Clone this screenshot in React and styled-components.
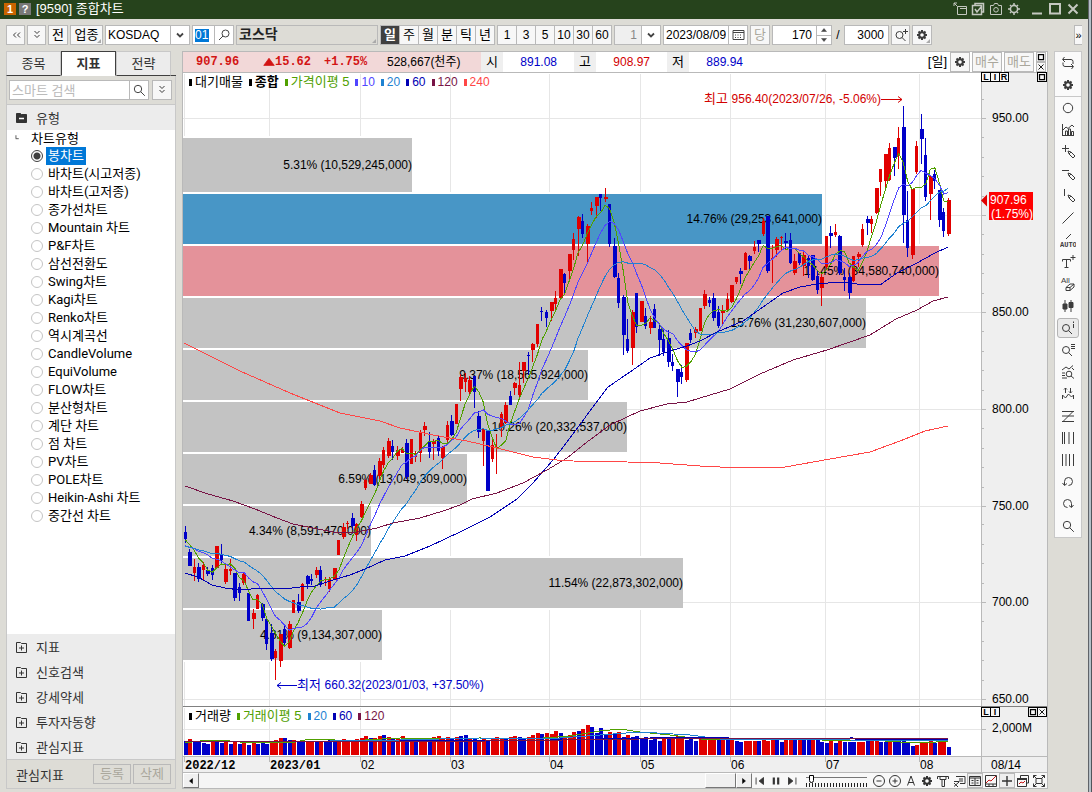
import React from 'react';
import styled, { createGlobalStyle } from 'styled-components';

const GlobalStyle = createGlobalStyle`
    * { box-sizing: border-box; }
    body {
        margin: 0;
        background: #dddcd6;
        font-family: "Liberation Sans", "Noto Sans CJK KR", sans-serif;
        font-size: 12px;
        color: #000;
    }
    button, input, select {
        font: inherit;
        color: inherit;
        margin: 0;
        padding: 0;
        border-radius: 0;
    }
`;

const RED = '#e10000';
const BLUE = '#0000c8';
const GREEN = '#50a000';
const VIOLET = '#5046ff';
const SKY = '#1e82d2';
const NAVY = '#0000b4';
const MAROON = '#781446';
const CORAL = '#ff4646';

/* ---------- window ---------- */

const Window = styled.div`
    display: flex;
    flex-direction: column;
    min-height: 100vh;
    padding-right: 4px;
    background: #dddcd6;
    box-shadow: inset -1px 0 #50545a, inset -3px 0 #b4bfc7, inset -4px 0 #60646a;
`;

const TitleBar = styled.header`
    display: flex;
    align-items: center;
    height: 19px;
    padding: 0 6px 2px 4px;
    background: #26431c;
    color: #fff;
`;

const Badge = styled.span`
    width: 12px;
    height: 12px;
    margin-right: 3px;
    background: ${(p) => p.$bg};
    font-size: 11px;
    font-weight: bold;
    line-height: 13px;
    text-align: center;
`;

const Title = styled.h1`
    margin: 0 auto 0 2px;
    font-size: 13px;
    line-height: 16px;
    font-weight: normal;
`;

const TitleButton = styled.button`
    display: flex;
    justify-content: center;
    width: 18px;
    border: 0;
    background: none;
    color: #c4c8c0;
`;

const TitleGap = styled.span`
    width: 5px;
`;

/* ---------- toolbar ---------- */

const Toolbar = styled.div`
    display: flex;
    height: 32px;
    padding: 6px;
    gap: 2px;
`;

const ToolButton = styled.button`
    position: relative;
    display: flex;
    align-items: center;
    justify-content: center;
    flex: none;
    width: ${(p) => p.$w || 20}px;
    height: 20px;
    border: 1px solid #b9b9b9;
    background: #f7f7f7;
    color: ${(p) => (p.disabled ? '#aaa79c' : '#000')};
    font-size: 13px;
    line-height: 18px;
    svg { flex: none; color: #3c3c3c; }
`;

const Corner = styled.i`
    position: absolute;
    right: 1px;
    bottom: 1px;
    border: 2px solid transparent;
    border-right-color: #aaa;
    border-bottom-color: #aaa;
`;

const Field = styled.div`
    display: flex;
    flex: none;
    width: ${(p) => p.$w}px;
    height: 20px;
    border: 1px solid #b9b9b9;
    background: #fff;
`;

const FieldInput = styled.input`
    flex: 1;
    min-width: 0;
    border: 0;
    padding: 0 ${(p) => (p.$right ? 4 : 2)}px;
    background: ${(p) => (p.disabled ? '#efefef' : '#fff')};
    color: ${(p) => (p.disabled ? '#888' : '#000')};
    text-align: ${(p) => (p.$right ? 'right' : 'left')};
    outline: 0;
    &::placeholder { color: #bbb; opacity: 1; }
`;

const Select = styled.select`
    flex: 1;
    min-width: 0;
    border: 0;
    padding: 0 2px;
    appearance: none;
    background: #fff;
`;

const FieldButton = styled.button`
    display: flex;
    flex: none;
    align-items: center;
    justify-content: center;
    width: 19px;
    border: 0;
    border-left: 1px solid #b9b9b9;
    background: #fff;
    color: #444;
`;

const CodeBox = styled.div`
    flex: 1;
    display: flex;
    align-items: center;
`;

const CodeInput = styled.input`
    width: 14px;
    height: 13px;
    margin-left: 2px;
    border: 0;
    background: #0078d7;
    color: #fff;
`;

const NameBox = styled.output`
    position: relative;
    flex: 0 1 142px;
    border: 1px solid #b9b9b9;
    padding-left: 2px;
    font-size: 14px;
    line-height: 17px;
    font-weight: bold;
    color: #222;
`;

const Segment = styled.div`
    display: flex;
    flex: none;
    border: 1px solid #b9b9b9;
    border-width: 1px 1px 1px 0;
`;

const SegmentButton = styled.button`
    width: 19px;
    border: 0;
    border-left: 1px solid #b9b9b9;
    background: ${(p) => (p.$active ? '#404040' : '#f7f7f7')};
    color: ${(p) => (p.$active ? '#fff' : '#000')};
    font-weight: ${(p) => (p.$active ? 'bold' : 'normal')};
    font-size: ${(p) => (p.$latin ? 12 : 13)}px;
    line-height: 18px;
`;

const Spin = styled.div`
    display: flex;
    flex-direction: column;
    width: 15px;
    border-left: 1px solid #b9b9b9;
`;

const SpinButton = styled.button`
    flex: 1;
    display: flex;
    align-items: center;
    justify-content: center;
    border: 0;
    border-bottom: ${(p) => (p.$up ? '1px solid #b9b9b9' : '0')};
    background: #fff;
    color: #444;
`;

const Slash = styled.span`
    width: 8px;
    text-align: center;
    line-height: 20px;
`;

const MoreButton = styled.button`
    width: 8px;
    height: 20px;
    margin-left: auto;
    border: 1px solid #b9b9b9;
    border-right: 0;
    background: #f7f7f7;
    font-size: 11px;
    line-height: 16px;
`;

/* ---------- side panel ---------- */

const Body = styled.main`
    flex: 1;
    display: grid;
    grid-template-columns: 170px minmax(0, 1fr) 28px;
    gap: 6px;
    padding: 0 6px 3px;
`;

const Side = styled.aside`
    display: flex;
    flex-direction: column;
`;

const Tabs = styled.div`
    display: flex;
    height: 25px;
    border-bottom: 1px solid #404040;
`;

const Tab = styled.button`
    width: 55px;
    height: 25px;
    border: 1px solid ${(p) => (p.$active ? '#404040' : '#c8c8c8')};
    border-bottom-color: ${(p) => (p.$active ? '#fff' : '#404040')};
    background: ${(p) => (p.$active ? '#fff' : '#ececec')};
    font-size: 13px;
    line-height: 22px;
    font-weight: ${(p) => (p.$active ? 'bold' : 'normal')};
    color: #333;
`;

const SideBox = styled.div`
    flex: 1;
    display: flex;
    flex-direction: column;
    border: 1px solid #c8c8c8;
    border-top: 0;
`;

const SearchRow = styled.div`
    display: flex;
    gap: 3px;
    padding: 4px 3px 4px 2px;
`;

const SearchField = styled(Field)`
    flex: 1;
    min-width: 0;
    font-size: 13px;
`;

const SectionHead = styled.button`
    display: flex;
    align-items: center;
    gap: 6px;
    height: 26px;
    padding: 0 7px;
    border: 0;
    border-top: ${(p) => (p.$line ? '1px solid #c8c8c8' : '0')};
    background: #ececec;
    font-size: 13px;
    color: #333;
`;

const Tree = styled.div`
    flex: 1;
    background: #fff;
    font-family: Roboto, "Noto Sans CJK KR", sans-serif;
    font-size: 13px;
    line-height: 18px;
`;

const TreeTitle = styled.div`
    display: flex;
    align-items: center;
    gap: 6px;
    height: 17px;
    padding-left: 8px;
`;

const RadioRow = styled.label`
    display: flex;
    align-items: center;
    height: 18px;
    padding-left: 24px;
    gap: 3px;
    span {
        padding: 0 2px;
        background: ${(p) => (p.$on ? '#0078d7' : 'none')};
        color: ${(p) => (p.$on ? '#fff' : '#000')};
    }
`;

const Radio = styled.input`
    appearance: none;
    width: 12px;
    height: 12px;
    border: 1px solid #c4c4c4;
    border-radius: 50%;
    background: #fff;
    &:checked {
        border-color: #404040;
        background: radial-gradient(circle, #404040 0 3px, #fff 4px);
    }
`;

const Accordion = styled.div`
    display: flex;
    flex-direction: column;
    background: #ececec;
`;

const Fold = styled(SectionHead)`
    height: 25px;
`;

const SideFoot = styled.div`
    display: flex;
    align-items: center;
    gap: 2px;
    height: 29px;
    padding: 0 4px 0 9px;
    border-top: 1px solid #c8c8c8;
    font-size: 13px;
    color: #333;
    span { margin-right: auto; }
`;

const FootButton = styled(ToolButton)`
    background: none;
`;

/* ---------- chart ---------- */

const ChartBox = styled.section`
    border: 1px solid #b9b9b9;
    background: #fff;
    min-width: 0;
`;

const Quote = styled.div`
    display: flex;
    height: 21px;
    border-bottom: 1px solid #b9b9b9;
    line-height: 20px;
`;

const QuoteMain = styled.div`
    display: flex;
    flex: none;
    width: 298px;
    padding-left: 13px;
    background: #f2d8d8;
    font-family: "Liberation Mono", monospace;
    font-weight: bold;
    color: #d21414;
    em {
        font: 12px/20px "Liberation Sans", "Noto Sans CJK KR", sans-serif;
        color: #000;
    }
`;

const QuoteCell = styled.span`
    display: flex;
    align-items: center;
    width: ${(p) => p.$w}px;
`;

const QuoteLabel = styled.div`
    flex: none;
    width: 22px;
    background: #efefef;
    text-align: center;
    font-size: 13px;
`;

const QuoteValue = styled.div`
    flex: none;
    width: 71px;
    padding-right: 17px;
    text-align: right;
    color: ${(p) => p.$color};
`;

const QuoteTools = styled.div`
    display: flex;
    align-items: center;
    gap: 2px;
    margin-left: auto;
    padding-right: 1px;
    > span {
        font-size: 13px;
        margin-right: 1px;
    }
`;

const Stack = styled.div`
    display: flex;
    flex-direction: column;
`;

const TinyButton = styled.button`
    display: flex;
    align-items: center;
    justify-content: center;
    width: 10px;
    height: 10px;
    border: 1px solid ${(p) => (p.$dark ? '#000' : '#b9b9b9')};
    margin-left: ${(p) => (p.$dark ? -1 : 0)}px;
    background: #f7f7f7;
    font-size: 9px;
    font-weight: bold;
    line-height: 8px;
    svg { flex: none; }
`;

const Pane = styled.div`
    position: relative;
    border-top: ${(p) => (p.$line ? '1px solid #808080' : '0')};
`;

const Plot = styled.svg`
    display: block;
    width: 100%;
    height: auto;
    font-family: "Liberation Sans", "Noto Sans CJK KR", sans-serif;
    font-size: 12px;
`;

const Legend = styled.div`
    position: absolute;
    top: 1px;
    left: 6px;
    display: flex;
    gap: 6px;
    line-height: 16px;
`;

const LegendItem = styled.span`
    display: flex;
    align-items: center;
    gap: 3px;
    color: ${(p) => p.$color};
    font-weight: ${(p) => (p.$bold ? 'bold' : 'normal')};
    font-size: ${(p) => (p.$hangul ? 13 : 12)}px;
    &::before {
        content: '';
        width: 3px;
        height: 7px;
        background: currentColor;
    }
`;

const PaneTools = styled.div`
    position: absolute;
    top: ${(p) => (p.$low ? 0 : -1)}px;
    right: 0;
    width: 66px;
    display: flex;
    justify-content: space-between;
    > div { display: flex; padding-left: 1px; }
`;

/* ---------- bottom strip ---------- */

const Strip = styled.div`
    display: flex;
    align-items: center;
    height: 15px;
    background: #f8f8f8;
`;

const ScrollTrack = styled.div`
    flex: 1;
    display: flex;
    justify-content: flex-end;
    height: 15px;
    background: #f5f5f5;
`;

const Bevel = styled.button`
    display: flex;
    align-items: center;
    justify-content: center;
    width: ${(p) => p.$w || 16}px;
    height: 15px;
    border: 1px solid;
    border-color: #fff #777 #777 #fff;
    background: #f0f0f0;
`;

const StripButton = styled.button`
    display: flex;
    align-items: center;
    justify-content: center;
    width: 16px;
    height: 15px;
    border: ${(p) => (p.$on ? '1px solid #b9b9b9' : '0')};
    background: ${(p) => (p.$on ? '#eee' : 'none')};
    color: #333;
    svg { flex: none; }
`;

const Zoom = styled.div`
    display: flex;
    flex-direction: column;
    width: 61px;
    margin: 0 4px 0 6px;
`;

const ZoomRange = styled.input`
    appearance: none;
    width: 100%;
    height: 8px;
    background: linear-gradient(#777, #777) 0 2px / 100% 1px no-repeat;
    &::-webkit-slider-thumb {
        appearance: none;
        width: 5px;
        height: 8px;
        border: 1px solid #000;
        border-radius: 0 0 3px 3px;
        background: #fff;
    }
`;

const Ticks = styled.div`
    height: 4px;
    background: repeating-linear-gradient(90deg, #222 0 1px, transparent 1px 3px);
`;

/* ---------- right tool column ---------- */

const Tools = styled.nav`
    align-self: start;
    display: flex;
    flex-direction: column;
    border: 1px solid #c8c8c8;
    background: #fafafa;
`;

const Tool = styled.button`
    display: flex;
    align-items: center;
    justify-content: center;
    height: ${(p) => (p.$line ? 23 : 22)}px;
    border: 0;
    border-bottom: ${(p) => (p.$line ? '1px solid #c8c8c8' : '0')};
    background: none;
    color: #3c3c3c;
    span {
        display: flex;
        padding: 1px 2px;
        border: 1px solid ${(p) => (p.$on ? '#b4b4b4' : 'transparent')};
        border-radius: 3px;
        background: ${(p) => (p.$on ? '#eaeaea' : 'none')};
    }
`;

/* every icon sits on a 16 x 16 grid */
const shapes = {
    gear: <g><path d="M8 3v10M3 8h10M4.500 4.500l7 7M11.500 4.500l-7 7" strokeWidth="2" /><circle cx="8" cy="8" r="2.800" strokeWidth="2" /><circle cx="8" cy="8" r="1.800" fill="#fff" stroke="none" /></g>,
    gearLine: <g><circle cx="8" cy="8" r="3.600" strokeWidth="1.600" /><path d="M8 2v2M8 12v2M2 8h2M12 8h2M4 4l1 1M11 11l1 1M12 4l-1 1M5 11l-1 1" strokeWidth="1.500" /></g>,
    lens: <g><circle cx="7" cy="7" r="3.700" /><path d="M9.800 9.800l4 4" /></g>,
    lensLeft: <g><circle cx="9.500" cy="6.500" r="3.500" /><path d="M7 9l-4 4" /></g>,
    lensPlus: <g><circle cx="6.500" cy="8" r="3.500" /><path d="M9 10.500l3.500 3.500M12.500 2v5M10 4.500h5" /></g>,
    lensInfo: <g><circle cx="6" cy="8" r="3.500" /><path d="M8.500 10.500l3.500 3.500M13.500 4v4M13.500 1.500v1.500" /></g>,
    lensList: <g><circle cx="6" cy="8" r="3.500" /><path d="M8.500 10.500l3.500 3.500M11 2.500h4M11 4.500h4M11 6.500h4" /></g>,
    lensWave: <g><circle cx="9" cy="10" r="2.800" /><path d="M11 12l3 2.500M2 9h3M2 11.500h3M2 14h5M2 6l4-3 3 2 4-3.500M12 4l2 2" /></g>,
    down2: <path d="M5.500 4l2.500 2.500L10.500 4M5.500 8l2.500 2.500L10.500 8" />,
    left2: <path d="M8 5.500L5.500 8 8 10.500M12 5.500L9.500 8l2.500 2.500" />,
    caret: <path d="M5 6.500l3 3 3-3" strokeWidth="1.800" />,
    calendar: <g><path d="M3 3.500h11v9H3zM3 5.500h11" /><path d="M5 8h7M5 10.500h7" strokeDasharray="1 1.500" /></g>,
    cycle: <path d="M4.500 2L2.500 4.500 5 7M3 4.500h8a2 2 0 0 1 2 2V9M11.500 14l2-2.500L11 9M13 11.500H5a2 2 0 0 1-2-2V7.500" />,
    circle: <circle cx="8" cy="8" r="4.700" />,
    chart: <path d="M2.500 2v12M2 13.500h12M5.500 13V9h2v4M8.500 13V7h2v6M11.500 13V9.500h2V13M3 8l3-3 2 1.500L12 3l2 2" />,
    crossPen: <g><path d="M5.500 1v7M2 4.500h7" /><path d="M8 7l1 3 4 4 2-2-4-4zM9 10l2-2" /></g>,
    dashPen: <g><path d="M2 4.500h7" /><path d="M8 7l1 3 4 4 2-2-4-4zM9 10l2-2" /></g>,
    barPen: <g><path d="M4.500 1v7" /><path d="M8 7l1 3 4 4 2-2-4-4zM9 10l2-2" /></g>,
    slope: <path d="M2.500 13.500l11-11" />,
    auto: <g><path d="M6 7l5-5" /><text x="0" y="15" fontSize="7" fontWeight="bold" fill="currentColor" stroke="none" fontFamily="Liberation Mono">AUTO</text></g>,
    textPlus: <path d="M2.500 7.500v-2h8v2M6.500 5.500v8M4.500 13.500h4M13 1v5M10.500 3.500h5" />,
    all: <g><text x="1" y="6.500" fontSize="8" fill="currentColor" stroke="none">All</text><path d="M6 11.500l4-3.500h4l-4 3.500zM6 11.500v3h4v-3M10 14.500l4-3.500V8" /></g>,
    candles: <path d="M5 2v12M11 2v12M3 6h4v5H3zM9 4.500h4v5H9z" fill="currentColor" />,
    peaks: <path d="M2.500 13V9l3 3 3-4 3 3 2-2v4M5.500 7V2M4 3.500L5.500 2 7 3.500M10.500 2v5M9 5.500L10.500 7 12 5.500" />,
    zed: <path d="M2 3.500h12M2 8h12M2 13.500h12M13 3.500l-10 10" />,
    fourBars: <path d="M2.500 2v12M4.500 2v12M9 2v12M13.500 2v12" />,
    evenBars: <path d="M2.500 2v12M6 2v12M9.500 2v12M13.500 2v12" />,
    undo: <path d="M4.500 11V7.500a4 4 0 1 1 4 4M2.500 9l2 2.500L7 9.500" />,
    redo: <path d="M11.500 11V7.500a4 4 0 1 0-4 4M13.500 9l-2 2.500L9 9.500" />,
    folder: <path d="M2.500 3.500h4l1 1h5v9h-10zM5 9h5M7.500 6.500v5" />,
    minusBox: <g><path d="M2.500 3.500h4l1 1h5v8h-10z" fill="currentColor" /><path d="M5 8.500h5" stroke="#fff" strokeWidth="1.500" /></g>,
    corner: <path d="M1.500 2v5M1 7.500h5" />,
    dock: <path d="M5.500 5.500h9v8h-9zM8 7.500h7M2 2l3.500 3.500M2 5V2h3" />,
    sheets: <path d="M2.500 4.500h9v9h-9zM5 4V2.500h8.500V11H12M5 8l2 3 4-5" strokeWidth="1.500" />,
    camera: <g><path d="M2.500 4.500h3l1-2h3l1 2h3v9h-11z" /><circle cx="8" cy="8.800" r="2.300" /></g>,
    min: <path d="M3 12.500h10" strokeWidth="2" />,
    max: <path d="M3 3h10v9.500H3z" strokeWidth="2" />,
    close: <path d="M3.500 3.500l9 9M12.500 3.500l-9 9" strokeWidth="2" />,
    first: <path d="M3.500 4v8M12 4L7 8l5 4z" fill="currentColor" />,
    pause: <path d="M5.500 4v8M10.500 4v8" strokeWidth="2.500" />,
    last: <path d="M12.500 4v8M4 4l5 4-5 4z" fill="currentColor" />,
    minus: <g><circle cx="8" cy="8" r="5.500" /><path d="M5.500 8h5" /></g>,
    plus: <g><circle cx="8" cy="8" r="5.500" /><path d="M5.500 8h5M8 5.500v5" /></g>,
    letter: <path d="M4.500 12.500L8 3l3.500 9.500M5.500 9.500h5" />,
    hammer: <path d="M2.500 6V3.500h11V6M5 3.500v3h6v-3M7 6.500v7h2.500v-7" />,
    export: <path d="M5 3.500h9v7H9M8 6h4M8 8h4M8 9l-5 4.500M3 10l4 4M3 8.500h5" />,
    panel: <path d="M2.500 3.500h11v9h-11zM3 5h10M8 5v7M4.500 7.500h2M4.500 10h2M9.500 7.500h2M9.500 10h2" />,
    trend: <g><path d="M2.500 2.500h11v11h-11zM2.500 11h11M6 11v2M10 11v2" /><path d="M3 10l3-3 2 1 5-5" stroke="#c81414" /></g>,
    cross: <path d="M8 3v10M3 8h10" strokeWidth="1.400" />,
    windows: <g><path d="M5.500 5V2.500h8V10H12M2.500 5.500h9v8h-9z" /><path d="M2 6h10" strokeWidth="2" /><path d="M4 11l2-2 2 1 2-2" stroke="#c81414" /></g>,
    expand: <path d="M2.500 5V2.500h3M10.500 2.500h3V5M13.500 10.500v3h-3M5.500 13.500h-3v-3M5 5.500h6v5H5zM2.500 2.500l3 3M13.500 2.500l-3 3M2.500 13.500l3-3M13.500 13.500l-3-3" />,
    box: <path d="M3 3h10v10H3z" strokeWidth="2.500" />,
    x: <path d="M3 3l10 10M13 3L3 13" strokeWidth="1.800" />,
    triUp: <path d="M3 11h10L8 5z" fill="currentColor" />,
    triDown: <path d="M3 5h10l-5 6z" fill="currentColor" />,
    triLeft: <path d="M11 3v10L5 8z" fill="currentColor" />,
    triRight: <path d="M5 3v10l6-5z" fill="currentColor" />,
    rise: <path d="M1 12.500h14L8 3z" fill="currentColor" />,
};

const Icon = ({ name, size = 16 }) => (
    <svg width={size} height={size} viewBox="0 0 16 16" fill="none" stroke="currentColor" aria-hidden="true">
        {shapes[name]}
    </svg>
);

/* ---------- data ---------- */

const chartTypes = [
    '봉차트', '바차트(시고저종)', '바차트(고저종)', '종가선차트', 'Mountain 차트', 'P&F차트', '삼선전환도',
    'Swing차트', 'Kagi차트', 'Renko차트', '역시계곡선', 'CandleVolume', 'EquiVolume', 'FLOW차트',
    '분산형차트', '계단 차트', '점 차트', 'PV차트', 'POLE차트', 'Heikin-Ashi 차트', '중간선 차트',
];

const folds = ['지표', '신호검색', '강세약세', '투자자동향', '관심지표'];

const toolNames = [
    'cycle', 'gear', 'circle', 'chart', 'crossPen', 'dashPen', 'barPen', 'slope', 'auto', 'textPlus', 'all',
    'candles', 'lensInfo', 'lensList', 'lensWave', 'peaks', 'zed', 'fourBars', 'evenBars', 'undo', 'redo', 'lens',
];

const stripNames = ['minus', 'plus', 'letter', 'gear', 'hammer', 'export', 'panel', 'trend', 'cross', 'windows', 'expand'];

// one candle: u(p) or d(own), high, body top, body bottom, low in chart units
const candles = `
d526,532,539,543 d549,552,566,566 u559,567,573,581 d563,567,579,582 u562,565,570,580 d567,570,574,576
d565,568,575,580 u546,546,568,568 d544,554,560,563 u563,569,582,584 u559,569,571,575 d573,573,598,601
d583,587,593,601 u573,574,583,585 d593,593,621,621 u609,613,619,629 u594,595,609,609 d603,604,618,621
d617,619,644,650 d624,633,659,661 u649,651,658,680 u634,634,661,667 d624,629,643,647 u621,624,648,649
u600,600,613,613 d594,602,611,613 u583,584,601,601 d575,576,584,589 d574,579,581,585 u567,570,575,578
d566,570,585,587 u577,579,580,586 u577,579,589,592 u568,568,580,580 u540,540,555,555 u523,527,537,539
u521,523,524,529 d513,518,526,530 u523,524,535,541 u501,504,517,518 u479,480,488,490 u473,475,484,484
d465,470,485,486 u458,461,476,480 u447,450,465,468 u438,441,456,458 d440,446,452,460 u446,450,456,460
u447,449,453,453 d439,443,477,479 u439,439,464,464 u451,456,457,462 u430,432,453,462 u422,426,430,436
d432,442,452,458 u439,441,444,460 d436,438,451,456 u446,447,458,469 u421,425,440,442 d415,421,435,436
u404,404,424,424 u374,377,389,401 u373,378,382,392 u376,380,392,395 d376,376,392,408 d411,416,432,438
u429,429,441,466 d431,431,491,491 u437,445,459,462 u434,447,448,474 u412,414,427,437 u402,405,423,424
d391,396,405,405 u382,383,388,395 u362,385,395,397 u362,362,371,383 d352,355,356,375 u343,344,350,362
u324,324,344,347 d307,311,312,321 d310,312,318,327 u302,302,311,321 u291,298,304,309 u269,269,298,298
d273,274,283,295 u254,254,271,281 u233,239,250,260 u216,217,229,256 d214,221,234,238 u224,226,244,263
u202,208,211,215 u197,197,206,218 d194,194,198,211 u188,197,199,202 d204,204,244,247 d238,246,277,278
d273,278,303,308 d295,297,335,355 d319,339,351,353 u310,312,348,365 d293,293,327,333 u301,301,322,322
d308,316,326,329 u316,322,328,334 d304,309,328,328 d325,329,340,356 d329,339,352,356 d330,338,362,367
d354,362,366,371 d369,369,382,397 d365,372,377,384 u343,343,380,382 d329,333,340,343 u327,329,333,338
u308,308,331,331 u290,294,306,309 d297,300,303,307 d293,298,318,321 d306,312,326,328 u305,310,313,325
u293,299,310,312 u285,285,302,303 u277,277,282,284 d268,271,274,284 u252,253,270,270 d255,256,261,271
u241,247,251,254 d240,240,244,252 u218,221,234,236 d216,216,271,273 u245,258,259,283 u237,239,250,257
u236,237,238,251 d233,241,243,249 d233,240,263,264 u254,261,273,275 d253,253,263,265 u252,255,266,276
d255,258,266,278 d255,255,280,281 d271,276,290,294 u274,277,288,306 u236,236,267,269 d226,233,236,248
u224,232,235,237 d235,236,273,275 d268,277,280,291 d273,277,293,299 u256,256,281,282 u252,254,257,267
u224,229,245,247 d216,219,223,235 u216,219,224,233 u188,188,213,214 u169,169,182,196 u154,154,181,189
u143,148,180,181 d147,147,158,176 u127,138,155,169 d106,127,215,243 d191,220,248,257 u189,189,255,259
u141,146,172,174 d114,129,139,164 d138,155,197,201 u176,176,194,220 d170,174,181,189 d190,190,220,227
d208,212,231,237 u198,200,234,236`
    .trim()
    .split(/\s+/)
    .map((s) => [s[0] === 'u', ...s.slice(1).split(',').map(Number)]);

// one volume bar: colour and height
const volumes = `
u14 d12 u13 u13 u17 d14 u16 d14 d13 d12 d11 u13 d13 d12 u15 d11 u13 d11 u12 d10 u12 d11 d13 d11 u14 u15 u17 d17
d15 u15 d14 d15 u14 u13 d14 u14 d14 d15 d13 u14 u16 u14 u15 u16 u17 u19 d17 u17 u19 d20 u18 d16 u17 u19 d16 u16
d15 u16 u17 d15 u18 u19 u17 u18 d16 u18 d19 d20 u17 d16 u15 u16 d15 u17 u18 u16 d17 u18 u19 d18 d16 u18 u20 u22
d21 u22 u21 u24 d22 u19 u20 u23 d24 u26 u30 d28 d22 d27 d20 u23 d22 u23 d18 u20 d18 d19 d17 d18 d15 d17 d14 u17
d16 u17 u19 u18 d15 d16 d14 u16 u15 u17 u16 d15 u16 d17 u16 d14 d13 u14 u14 u14 d14 u15 u14 u15 d16 d13 u15 u16
d15 u15 d15 d16 u15 d15 d13 d12 u14 d12 u15 d13 d13 d13 u13 u13 d14 u15 u14 d13 d13 u14 d13 d14 d15 d12 d9 u10
u12 u13 u15 d12 u13 u14 d8`
    .trim()
    .split(/\s+/)
    .slice(-170)
    .map((s) => [s[0] === 'u', Number(s.slice(1))]);

const barX = (i) => 185.3 + i * 4.515;

// closes of the days before the first candle, so the short averages start at the left edge
const lead = [...Array(10).fill(547), ...Array(5).fill(552), ...Array(4).fill(540)];
const closes = [...lead, ...candles.map(([up, , top, bottom]) => (up ? top : bottom))];

const average = (n) =>
    candles
        .map((_, i) => {
            const end = i + lead.length + 1;
            const sum = closes.slice(end - n, end).reduce((a, b) => a + b, 0);
            return `${barX(i).toFixed(1)},${(sum / n).toFixed(1)}`;
        })
        .join(' ');

const longLines = [
    [NAVY, '185,573 198,577 212,585 225,588 240,590 262,588 285,589 300,587 315,586 333,580 350,575 365,569 385,560 405,556 430,546 460,532 490,517 517,499 533,483 540,475 553,460 567,442 587,415 608,387 630,372 650,358 670,351 687,346 700,341 717,332 743,321 763,307 783,293 800,287 817,284 840,282 857,284 880,285 897,273 917,263 933,254 948,247'],
    [MAROON, '185,486 208,494 233,501 255,509 277,518 293,524 313,528 333,532 357,532 377,528 393,523 420,518 443,511 460,505 472,499 497,493 523,483 547,470 567,458 587,442 610,425 640,411 667,404 687,402 700,398 730,389 760,374 793,360 827,350 850,342 870,335 896,319 917,310 933,301 948,297'],
    [CORAL, '184,343 240,371 290,393 340,413 380,421 400,428 433,435 467,441 497,448 533,457 557,460 573,461 627,462 660,463 700,466 720,467 785,467 830,459 870,452 900,441 925,431 948,426'],
];

const bands = [
    [138, 54, 412, '#c3c3c3', '5.31% (10,529,245,000)'],
    [194, 50, 822, '#4896c6', '14.76% (29,253,641,000)'],
    [246, 50, 939, '#e4929a', '17.45% (34,580,740,000)'],
    [298, 50, 866, '#c3c3c3', '15.76% (31,230,607,000)'],
    [350, 50, 588, '#c3c3c3', '9.37% (18,565,924,000)'],
    [402, 50, 627, '#c3c3c3', '10.26% (20,332,537,000)'],
    [454, 50, 467, '#c3c3c3', '6.59% (13,049,309,000)'],
    [506, 50, 371, '#c3c3c3', '4.34% (8,591,470,000)'],
    [558, 50, 683, '#c3c3c3', '11.54% (22,873,302,000)'],
    [610, 50, 382, '#c3c3c3', '4.61% (9,134,307,000)'],
];

const months = [184, 269, 360, 450, 549, 640, 730, 825, 919];
const monthNames = ['2022/12', '2023/01', '02', '03', '04', '05', '06', '07', '08'];
const prices = [[950, 118], [900, 215], [850, 312], [800, 409], [750, 506], [700, 602], [650, 699]];

/* ---------- parts ---------- */

const PricePlot = () => (
    <Plot viewBox="183 73 864 633" role="img" aria-label="KOSDAQ 일봉">
        <g shapeRendering="crispEdges">
            <path d="M183 73h798v633H183z" fill="#fff" />
            {months.map((x) => <path key={x} d={`M${x} 74h1v632h-1z`} fill="#e6e6e6" />)}
            {prices.map(([p, y]) => <path key={p} d={`M183 ${y}h798v1H183z`} fill="#e6e6e6" />)}
            {bands.map(([y, h, end, color]) => (
                <React.Fragment key={y}>
                    <rect x="183" y={y - 2} width={end - 183} height={h + 4} fill="#fff" />
                    <rect x="183" y={y} width={end - 183} height={h} fill={color} />
                </React.Fragment>
            ))}
        </g>
        {bands.map(([y, h, end, , label]) => (
            <text key={y} x={end} y={y + h / 2 + 4} textAnchor="end">{label}</text>
        ))}
        <g shapeRendering="crispEdges">
            {candles.map(([up, high, top, bottom, low], i) => {
                const x = Math.round(barX(i) - 0.5);
                const flat = bottom - top < 2;
                return (
                    <g key={i} fill={up ? RED : BLUE}>
                        <rect x={x} y={high} width="1" height={low - high} />
                        <rect x={x - 1} y={top} width={flat ? 3 : 3 + (i % 2)} height={bottom - top} />
                    </g>
                );
            })}
        </g>
        <g fill="none" shapeRendering="crispEdges">
            <polyline points={average(5)} stroke={GREEN} />
            <polyline points={average(10)} stroke={VIOLET} />
            <polyline points={average(20)} stroke={SKY} />
            {longLines.map(([color, points]) => <polyline key={color} points={points} stroke={color} />)}
        </g>
        <g fill="#d20000">
            <text x="881" y="103" textAnchor="end"><tspan fontSize="13">최고 </tspan> 956.40(2023/07/26, -5.06%)</text>
            <path d="M881 99.500h21M898 96.500l4 3-4 3" stroke="#d20000" fill="none" />
        </g>
        <g fill={BLUE}>
            <text x="297" y="689"><tspan fontSize="13">최저 </tspan> 660.32(2023/01/03, +37.50%)</text>
            <path d="M297 685.500h-20M281 682.500l-4 3 4 3" stroke={BLUE} fill="none" />
        </g>
        <g shapeRendering="crispEdges">
            <path d="M981 73h66v633h-66z" fill="#efefef" />
            <path d="M981 73h1v633h-1z" fill="#b9b9b9" />
            {prices.map(([p, y]) => (
                <g key={p} fill="#b9b9b9">
                    <rect x="981" y={y} width="5" height="1" />
                    {[1, 2, 3, 4].map((n) => (
                        <rect key={n} x="981" y={Math.round(y - n * 19.4)} width="3" height="1" />
                    ))}
                </g>
            ))}
            <path d="M989 192h44v28h-44z" fill="#f00" />
        </g>
        {prices.filter(([p]) => p !== 900).map(([p, y]) => <text key={p} x="992" y={y + 4}>{p}.00</text>)}
        <path d="M981 200.500l6-6v12z" fill={RED} />
        <text x="990" y="204" fill="#fff">907.96</text>
        <text x="991" y="218" fill="#fff">(1.75%)</text>
    </Plot>
);

const VolumePlot = () => (
    <Plot viewBox="183 707 864 66" role="img" aria-label="거래량">
        <g shapeRendering="crispEdges">
            {months.map((x) => <path key={x} d={`M${x} 708h1v48h-1z`} fill="#e6e6e6" />)}
            <path d="M183 729h798v1H183z" fill="#e6e6e6" />
            {volumes.map(([up, v], i) => (
                <rect key={i} x={Math.round(barX(i) - 1.5)} y={755 - v} width="4" height={v} fill={up ? RED : BLUE} />
            ))}
            <path d="M183 756h864v17H183z" fill="#efefef" />
            <path d="M183 756h864v1H183z" fill="#b9b9b9" />
            <path d="M981 707h66v49h-66z" fill="#efefef" />
            <path d="M981 707h1v66h-1zM981 729h5v1h-5zM183 772h864v1H183z" fill="#b9b9b9" />
            {months.map((x) => <path key={x} d={`M${x} 756h1v6h-1z`} fill="#b9b9b9" />)}
        </g>
        <g fill="none" shapeRendering="crispEdges">
            <polyline points="185,743 200,741 220,740 240,742 265,742 290,743 310,739 335,740 365,740 400,738 440,739 480,738 530,739 570,736 600,731 620,729 640,732 670,735 700,739 740,740 780,739 815,739 830,741 870,740 900,742 925,743 948,741" stroke={GREEN} />
            <polyline points="185,742 265,741 330,741 400,740 480,738 560,738 600,735 640,732 690,735 720,739 790,739 850,740 948,741" stroke={SKY} />
            <polyline points="185,742 400,741 550,740 650,738 730,737 850,737 855,739 930,739 948,740" stroke={NAVY} />
            <polyline points="185,742 485,741 640,739 948,738" stroke={MAROON} />
        </g>
        {monthNames.map((m, i) => (
            <text
                key={m}
                x={months[i] + 1}
                y="769"
                fontFamily={i < 2 ? 'Liberation Mono' : undefined}
                fontWeight={i < 2 ? 'bold' : undefined}
            >
                {m}
            </text>
        ))}
        <text x="992" y="732">2,000M</text>
        <text x="991" y="769">08/14</text>
    </Plot>
);

const SidePanel = () => (
    <Side>
        <Tabs>
            <Tab>종목</Tab>
            <Tab $active>지표</Tab>
            <Tab>전략</Tab>
        </Tabs>
        <SideBox>
            <SearchRow>
                <SearchField>
                    <FieldInput placeholder="스마트 검색" aria-label="스마트 검색" />
                    <FieldButton aria-label="검색"><Icon name="lens" /></FieldButton>
                </SearchField>
                <ToolButton aria-label="펼치기"><Icon name="down2" /></ToolButton>
            </SearchRow>
            <SectionHead $line><Icon name="minusBox" />유형</SectionHead>
            <Tree>
                <TreeTitle><Icon name="corner" size={10} />차트유형</TreeTitle>
                {chartTypes.map((name, i) => (
                    <RadioRow key={name} $on={i === 0}>
                        <Radio type="radio" name="chartType" defaultChecked={i === 0} />
                        <span>{name}</span>
                    </RadioRow>
                ))}
            </Tree>
            <Accordion>
                {folds.map((name) => (
                    <Fold key={name}><Icon name="folder" />{name}</Fold>
                ))}
            </Accordion>
            <SideFoot>
                <span>관심지표</span>
                <FootButton $w={38} disabled>등록</FootButton>
                <FootButton $w={38} disabled>삭제</FootButton>
            </SideFoot>
        </SideBox>
    </Side>
);

const TopToolbar = () => (
    <Toolbar>
        <ToolButton $w={19} aria-label="접기"><Icon name="left2" /></ToolButton>
        <ToolButton $w={19} aria-label="메뉴"><Icon name="down2" /></ToolButton>
        <ToolButton>전</ToolButton>
        <ToolButton $w={33}>업종<Corner /></ToolButton>
        <Field $w={85}>
            <Select aria-label="시장" defaultValue="KOSDAQ"><option>KOSDAQ</option></Select>
            <FieldButton aria-label="시장 선택"><Icon name="caret" /></FieldButton>
        </Field>
        <Field $w={42}>
            <CodeBox><CodeInput aria-label="코드" defaultValue="01" /></CodeBox>
            <FieldButton aria-label="찾기"><Icon name="lensLeft" /></FieldButton>
        </Field>
        <NameBox>코스닥<Corner /></NameBox>
        <Segment>
            {['일', '주', '월', '분', '틱', '년'].map((t, i) => <SegmentButton key={t} $active={i === 0}>{t}</SegmentButton>)}
        </Segment>
        <Segment>
            {['1', '3', '5', '10', '30', '60'].map((t) => <SegmentButton key={t} $latin>{t}</SegmentButton>)}
        </Segment>
        <Field $w={47}>
            <FieldInput $right disabled defaultValue="1" aria-label="간격" />
            <FieldButton aria-label="간격 선택"><Icon name="caret" /></FieldButton>
        </Field>
        <Field $w={85}>
            <FieldInput defaultValue="2023/08/09" aria-label="날짜" />
            <FieldButton aria-label="달력"><Icon name="calendar" /></FieldButton>
        </Field>
        <ToolButton disabled>당</ToolButton>
        <Field $w={60}>
            <FieldInput $right defaultValue="170" aria-label="표시 개수" />
            <Spin>
                <SpinButton $up aria-label="증가"><Icon name="triUp" size={8} /></SpinButton>
                <SpinButton aria-label="감소"><Icon name="triDown" size={8} /></SpinButton>
            </Spin>
        </Field>
        <Slash>/</Slash>
        <Field $w={45}><FieldInput $right defaultValue="3000" aria-label="전체 개수" /></Field>
        <ToolButton $w={19} aria-label="확대"><Icon name="lensPlus" /></ToolButton>
        <ToolButton aria-label="설정"><Icon name="gear" /><Corner /></ToolButton>
        <MoreButton>»</MoreButton>
    </Toolbar>
);

const ChartPanel = () => (
    <ChartBox>
        <Quote>
            <QuoteMain>
                <QuoteCell $w={67}>907.96</QuoteCell>
                <QuoteCell $w={61}><Icon name="rise" size={12} />15.62</QuoteCell>
                <QuoteCell $w={63}>+1.75%</QuoteCell>
                <em>528,667(천주)</em>
            </QuoteMain>
            <QuoteLabel>시</QuoteLabel>
            <QuoteValue $color={BLUE}>891.08</QuoteValue>
            <QuoteLabel>고</QuoteLabel>
            <QuoteValue $color="#d20000">908.97</QuoteValue>
            <QuoteLabel>저</QuoteLabel>
            <QuoteValue $color={BLUE}>889.94</QuoteValue>
            <QuoteTools>
                <span>[일]</span>
                <ToolButton aria-label="차트 설정"><Icon name="gear" /></ToolButton>
                <ToolButton $w={30} disabled>매수</ToolButton>
                <ToolButton $w={30} disabled>매도</ToolButton>
                <Stack>
                    <TinyButton aria-label="최대화"><Icon name="box" size={8} /></TinyButton>
                    <TinyButton aria-label="닫기"><Icon name="x" size={8} /></TinyButton>
                </Stack>
            </QuoteTools>
        </Quote>
        <Pane>
            <PricePlot />
            <Legend>
                <LegendItem $hangul $color="#000">대기매물</LegendItem>
                <LegendItem $hangul $bold $color="#000">종합</LegendItem>
                <LegendItem $hangul $color={GREEN}>가격이평 5</LegendItem>
                <LegendItem $color={VIOLET}>10</LegendItem>
                <LegendItem $color={SKY}>20</LegendItem>
                <LegendItem $color={NAVY}>60</LegendItem>
                <LegendItem $color={MAROON}>120</LegendItem>
                <LegendItem $color={CORAL}>240</LegendItem>
            </Legend>
            <PaneTools>
                <div>{['L', 'I', 'R'].map((t) => <TinyButton key={t} $dark>{t}</TinyButton>)}</div>
                <TinyButton $dark aria-label="확장"><Icon name="box" size={8} /></TinyButton>
            </PaneTools>
        </Pane>
        <Pane $line>
            <VolumePlot />
            <Legend>
                <LegendItem $hangul $color="#000">거래량</LegendItem>
                <LegendItem $hangul $color={GREEN}>거래이평 5</LegendItem>
                <LegendItem $color={SKY}>20</LegendItem>
                <LegendItem $color={NAVY}>60</LegendItem>
                <LegendItem $color={MAROON}>120</LegendItem>
            </Legend>
            <PaneTools $low>
                <div>{['L', 'I'].map((t) => <TinyButton key={t} $dark>{t}</TinyButton>)}</div>
                <div>
                    <TinyButton $dark aria-label="확장"><Icon name="box" size={8} /></TinyButton>
                    <TinyButton $dark aria-label="닫기"><Icon name="x" size={8} /></TinyButton>
                </div>
            </PaneTools>
        </Pane>
        <Strip>
            <Bevel aria-label="왼쪽"><Icon name="triLeft" size={8} /></Bevel>
            <ScrollTrack><Bevel $w={31} aria-label="이동 막대" /></ScrollTrack>
            <Bevel aria-label="오른쪽"><Icon name="triRight" size={8} /></Bevel>
            {['first', 'pause', 'last'].map((n) => <StripButton key={n} aria-label={n}><Icon name={n} size={14} /></StripButton>)}
            <Zoom>
                <ZoomRange type="range" min="0" max="100" defaultValue="5" aria-label="확대 비율" />
                <Ticks />
            </Zoom>
            {stripNames.map((n) => (
                <StripButton key={n} $on={n === 'panel' || n === 'cross'} aria-label={n}><Icon name={n} /></StripButton>
            ))}
        </Strip>
    </ChartBox>
);

const App = () => (
    <Window>
        <GlobalStyle />
        <TitleBar>
            <Badge $bg="#c86400">1</Badge>
            <Badge $bg="#787878">?</Badge>
            <Title>[9590] 종합차트</Title>
            {['dock', 'sheets', 'camera', 'gearLine'].map((n) => (
                <TitleButton key={n} aria-label={n}><Icon name={n} /></TitleButton>
            ))}
            <TitleGap />
            {['min', 'max', 'close'].map((n) => (
                <TitleButton key={n} aria-label={n}><Icon name={n} /></TitleButton>
            ))}
        </TitleBar>
        <TopToolbar />
        <Body>
            <SidePanel />
            <ChartPanel />
            <Tools>
                {toolNames.map((n, i) => (
                    <Tool key={n} $line={i === 1} $on={n === 'lensInfo'} aria-label={n}>
                        <span><Icon name={n} /></span>
                    </Tool>
                ))}
            </Tools>
        </Body>
    </Window>
);

export default App;
